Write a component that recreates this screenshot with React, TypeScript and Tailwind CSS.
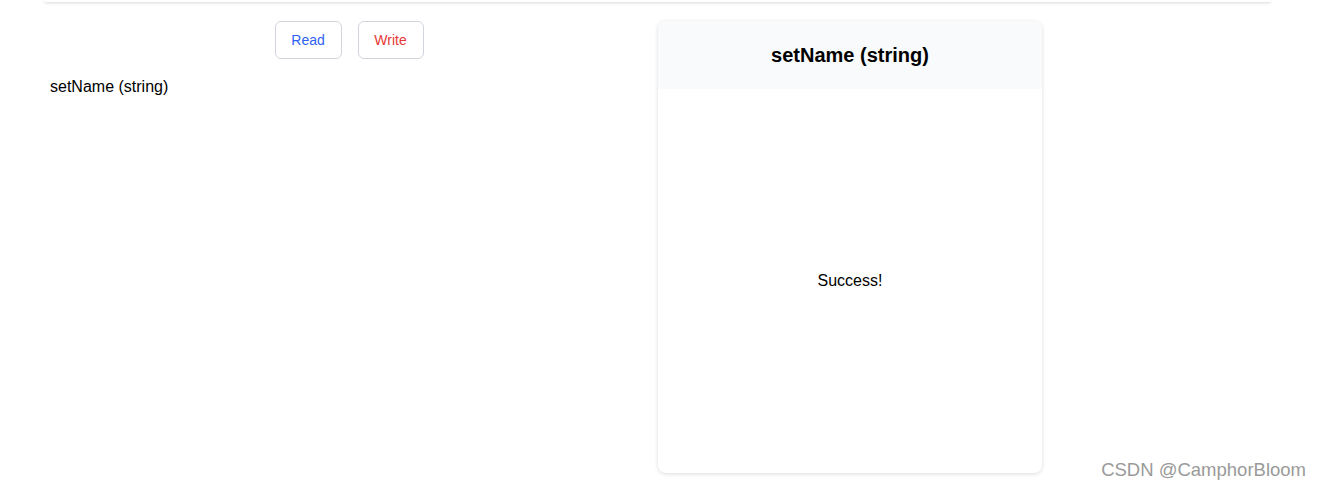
export default function App() {
  return (
    <div
      className="relative min-h-[491px] bg-white text-black"
      style={{ fontFamily: '"Liberation Sans", Arial, sans-serif' }}
    >
      <div className="pl-[44px] pr-[50px]">
        {/* bottom edge of the card above, scrolled out of view */}
        <div className="h-[2px] rounded-b-md bg-white shadow-[0_1px_3px_rgba(0,0,0,0.18)]" />

        <div className="mt-[19px] grid grid-cols-[614px_1fr]">
          <div className="pr-[4px]">
            <div className="flex justify-center gap-4">
              <button className="h-[38px] w-[67px] rounded-md border border-gray-300 bg-white text-sm text-[#2f62f0]">
                Read
              </button>
              <button className="h-[38px] w-[66px] rounded-md border border-gray-300 bg-white text-sm text-[#e53935]">
                Write
              </button>
            </div>
            <p className="mt-[16px] pl-[6px] text-base leading-6">setName (string)</p>
          </div>

          <div className="flex h-[452px] w-[384px] flex-col overflow-hidden rounded-lg bg-white shadow-[0_1px_4px_rgba(0,0,0,0.14)]">
            <div className="flex h-[68px] items-center justify-center bg-[#f9fafb]">
              <h2 className="text-xl font-bold">setName (string)</h2>
            </div>
            <div className="flex flex-1 items-center justify-center">
              <p className="text-base">Success!</p>
            </div>
          </div>
        </div>
      </div>

      <div className="absolute bottom-[7px] right-[15px] text-[18.5px] text-[#9a9a9a] [text-shadow:0_0_1px_#fff]">
        CSDN @CamphorBloom
      </div>
    </div>
  );
}
